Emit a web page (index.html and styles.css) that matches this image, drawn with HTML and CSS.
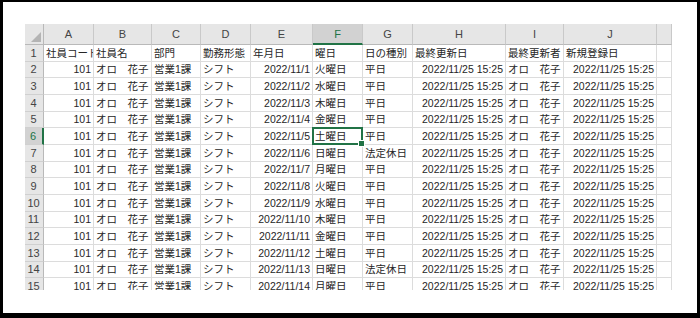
FILE: index.html
```html
<!DOCTYPE html>
<html lang="ja">
<head>
<meta charset="utf-8">
<title>Sheet</title>
<link rel="stylesheet" href="styles.css">
</head>
<body>
<div class="frame">
  <div class="sheet">
    <div class="h corner"><svg width="10" height="10" viewBox="0 0 10 10"><polygon points="10,0 10,10 0,10" fill="#b4b4b4"/></svg></div>
    <div class="h col">A</div><div class="h col">B</div><div class="h col">C</div><div class="h col">D</div><div class="h col">E</div><div class="h col act-col">F</div><div class="h col">G</div><div class="h col">H</div><div class="h col">I</div><div class="h col">J</div><div class="h col"></div>

    <div class="h rh">1</div><div class="c">社員コード</div><div class="c">社員名</div><div class="c">部門</div><div class="c">勤務形態</div><div class="c">年月日</div><div class="c">曜日</div><div class="c">日の種別</div><div class="c">最終更新日</div><div class="c">最終更新者</div><div class="c">新規登録日</div><div class="c"></div>

    <div class="h rh">2</div><div class="c r">101</div><div class="c">オロ　花子</div><div class="c">営業1課</div><div class="c">シフト</div><div class="c r">2022/11/1</div><div class="c">火曜日</div><div class="c">平日</div><div class="c r">2022/11/25 15:25</div><div class="c">オロ　花子</div><div class="c r">2022/11/25 15:25</div><div class="c"></div>

    <div class="h rh">3</div><div class="c r">101</div><div class="c">オロ　花子</div><div class="c">営業1課</div><div class="c">シフト</div><div class="c r">2022/11/2</div><div class="c">水曜日</div><div class="c">平日</div><div class="c r">2022/11/25 15:25</div><div class="c">オロ　花子</div><div class="c r">2022/11/25 15:25</div><div class="c"></div>

    <div class="h rh">4</div><div class="c r">101</div><div class="c">オロ　花子</div><div class="c">営業1課</div><div class="c">シフト</div><div class="c r">2022/11/3</div><div class="c">木曜日</div><div class="c">平日</div><div class="c r">2022/11/25 15:25</div><div class="c">オロ　花子</div><div class="c r">2022/11/25 15:25</div><div class="c"></div>

    <div class="h rh">5</div><div class="c r">101</div><div class="c">オロ　花子</div><div class="c">営業1課</div><div class="c">シフト</div><div class="c r">2022/11/4</div><div class="c">金曜日</div><div class="c">平日</div><div class="c r">2022/11/25 15:25</div><div class="c">オロ　花子</div><div class="c r">2022/11/25 15:25</div><div class="c"></div>

    <div class="h rh act-row">6</div><div class="c r">101</div><div class="c">オロ　花子</div><div class="c">営業1課</div><div class="c">シフト</div><div class="c r">2022/11/5</div><div class="c sel">土曜日</div><div class="c">平日</div><div class="c r">2022/11/25 15:25</div><div class="c">オロ　花子</div><div class="c r">2022/11/25 15:25</div><div class="c"></div>

    <div class="h rh">7</div><div class="c r">101</div><div class="c">オロ　花子</div><div class="c">営業1課</div><div class="c">シフト</div><div class="c r">2022/11/6</div><div class="c">日曜日</div><div class="c">法定休日</div><div class="c r">2022/11/25 15:25</div><div class="c">オロ　花子</div><div class="c r">2022/11/25 15:25</div><div class="c"></div>

    <div class="h rh">8</div><div class="c r">101</div><div class="c">オロ　花子</div><div class="c">営業1課</div><div class="c">シフト</div><div class="c r">2022/11/7</div><div class="c">月曜日</div><div class="c">平日</div><div class="c r">2022/11/25 15:25</div><div class="c">オロ　花子</div><div class="c r">2022/11/25 15:25</div><div class="c"></div>

    <div class="h rh">9</div><div class="c r">101</div><div class="c">オロ　花子</div><div class="c">営業1課</div><div class="c">シフト</div><div class="c r">2022/11/8</div><div class="c">火曜日</div><div class="c">平日</div><div class="c r">2022/11/25 15:25</div><div class="c">オロ　花子</div><div class="c r">2022/11/25 15:25</div><div class="c"></div>

    <div class="h rh">10</div><div class="c r">101</div><div class="c">オロ　花子</div><div class="c">営業1課</div><div class="c">シフト</div><div class="c r">2022/11/9</div><div class="c">水曜日</div><div class="c">平日</div><div class="c r">2022/11/25 15:25</div><div class="c">オロ　花子</div><div class="c r">2022/11/25 15:25</div><div class="c"></div>

    <div class="h rh">11</div><div class="c r">101</div><div class="c">オロ　花子</div><div class="c">営業1課</div><div class="c">シフト</div><div class="c r">2022/11/10</div><div class="c">木曜日</div><div class="c">平日</div><div class="c r">2022/11/25 15:25</div><div class="c">オロ　花子</div><div class="c r">2022/11/25 15:25</div><div class="c"></div>

    <div class="h rh">12</div><div class="c r">101</div><div class="c">オロ　花子</div><div class="c">営業1課</div><div class="c">シフト</div><div class="c r">2022/11/11</div><div class="c">金曜日</div><div class="c">平日</div><div class="c r">2022/11/25 15:25</div><div class="c">オロ　花子</div><div class="c r">2022/11/25 15:25</div><div class="c"></div>

    <div class="h rh">13</div><div class="c r">101</div><div class="c">オロ　花子</div><div class="c">営業1課</div><div class="c">シフト</div><div class="c r">2022/11/12</div><div class="c">土曜日</div><div class="c">平日</div><div class="c r">2022/11/25 15:25</div><div class="c">オロ　花子</div><div class="c r">2022/11/25 15:25</div><div class="c"></div>

    <div class="h rh">14</div><div class="c r">101</div><div class="c">オロ　花子</div><div class="c">営業1課</div><div class="c">シフト</div><div class="c r">2022/11/13</div><div class="c">日曜日</div><div class="c">法定休日</div><div class="c r">2022/11/25 15:25</div><div class="c">オロ　花子</div><div class="c r">2022/11/25 15:25</div><div class="c"></div>

    <div class="h rh">15</div><div class="c r">101</div><div class="c">オロ　花子</div><div class="c">営業1課</div><div class="c">シフト</div><div class="c r">2022/11/14</div><div class="c">月曜日</div><div class="c">平日</div><div class="c r">2022/11/25 15:25</div><div class="c">オロ　花子</div><div class="c r">2022/11/25 15:25</div><div class="c"></div>
  </div>
</div>
</body>
</html>
```

FILE: styles.css
```css
html, body {
  margin: 0;
  padding: 0;
  background: #000;
}

.frame {
  margin: 2px 3px 0 3px;
  height: 311px;
  background: #fff;
  padding: 22px 0 0 22px;
  box-sizing: border-box;
  font-family: "Liberation Sans", "Noto Sans CJK JP", sans-serif;
  font-size: 10.5px;
  color: #262626;
}

.sheet {
  display: grid;
  grid-template-columns: 19px 50px 58px 49px 50px 62px 50px 50px 93px 58px 93px 15px;
  grid-template-rows: 21px repeat(15, 16.67px);
  width: 647px;
  height: 266px;
  overflow: hidden;
}

.c {
  display: flex;
  align-items: center;
  padding: 0 2px;
  border-right: 1px solid #dcdcdc;
  border-bottom: 1px solid #dcdcdc;
  white-space: nowrap;
  overflow: hidden;
  line-height: 14px;
  min-width: 0;
}

.r {
  justify-content: flex-end;
}

.h {
  display: flex;
  align-items: center;
  justify-content: center;
  background: #e6e6e6;
  color: #444;
  line-height: 14px;
  overflow: hidden;
}

.col {
  border-right: 1px solid #c9c9c9;
  border-bottom: 1px solid #b9b9b9;
  font-size: 11px;
}

.corner {
  justify-content: flex-end;
  align-items: flex-end;
  padding: 0 2px 2px 0;
  border-right: 1px solid #b9b9b9;
  border-bottom: 1px solid #b9b9b9;
}

.rh {
  border-right: 1px solid #b9b9b9;
  border-bottom: 1px solid #d0d0d0;
  padding-right: 1px;
  font-size: 11px;
}

.act-col {
  background: #d2d2d2;
  color: #217346;
  border-bottom: 2px solid #217346;
}

.act-row {
  background: #d2d2d2;
  color: #217346;
  border-right: 2px solid #217346;
}

.sel {
  position: relative;
  overflow: visible;
}

.sel::after {
  content: "";
  position: absolute;
  left: -1px;
  top: -1px;
  right: -1px;
  bottom: -1px;
  border: 2px solid #217346;
  z-index: 2;
}

.sel::before {
  content: "";
  position: absolute;
  right: -3px;
  bottom: -3px;
  width: 5px;
  height: 5px;
  background: #217346;
  border: 1px solid #fff;
  z-index: 3;
}
```
